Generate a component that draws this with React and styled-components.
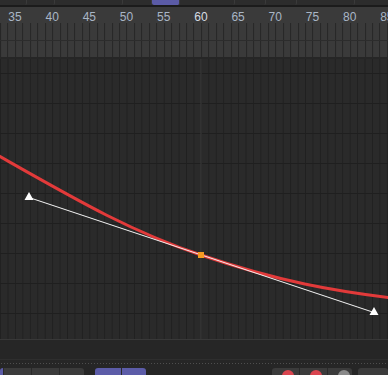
import React from 'react';
import styled, { createGlobalStyle } from 'styled-components';

const FRAME = 7.44;
const ORIGIN = 0.1; // x of frame 33
const xOf = (f) => ORIGIN + (f - 33) * FRAME;

const Global = createGlobalStyle`
  html, body { margin: 0; padding: 0; background: #2a2a2a; overflow: hidden; }
  body { font-family: "Liberation Sans", Arial, sans-serif; }
`;

const Screen = styled.div`
  width: 388px;
  height: 375px;
  display: flex;
  flex-direction: column;
  background: #2a2a2a;
  overflow: hidden;
`;

const TopStrip = styled.div`
  height: 5px;
  display: flex;
  background: #2c2c2c;
  border-bottom: 2px solid #1b1b1b;
`;

const StripCell = styled.div`
  width: ${(p) => p.$w}px;
  flex: none;
  background: ${(p) => (p.$active ? '#5b5ba6' : 'transparent')};
  border-right: 1px solid #3a3a3a;
  border-radius: 0 0 2px 2px;
`;

const Ruler = styled.div`
  background: #3a3a3a;
  display: flex;
  flex-direction: column;
`;

const Labels = styled.div`
  height: 16px;
  display: flex;
  margin-left: ${xOf(35) - FRAME * 2.5}px;
`;

const Label = styled.div`
  width: ${FRAME * 5}px;
  flex: none;
  text-align: center;
  font-size: 12px;
  line-height: 20px;
  color: ${(p) => (p.$current ? '#d7dce2' : '#a9b6c6')};
`;

const TickRow = styled.div`
  height: ${(p) => p.$h}px;
  background-image: repeating-linear-gradient(
    to right,
    #262626 0,
    #262626 1px,
    transparent 1px,
    transparent ${FRAME}px
  );
  background-position: ${ORIGIN}px 0;
  border-bottom: ${(p) => (p.$divider ? '1px solid #2c2c2c' : 'none')};
`;

const Gap = styled.div`
  height: 2px;
  background: #262626;
`;

const CurveArea = styled.div`
  position: relative;
  height: 280px;
  background-color: #2a2a2a;
  background-image:
    repeating-linear-gradient(to bottom, transparent 0, transparent 15px, #1f1f1f 15px, #1f1f1f 16px, transparent 16px, transparent 30px),
    repeating-linear-gradient(to right, #202020 0, #202020 1px, transparent 1px, transparent ${FRAME}px);
  background-position: 0 -1px, ${ORIGIN}px 0;
  background-size: 100% 30px, ${FRAME}px 100%;
`;

const Graph = styled.svg`
  position: absolute;
  inset: 0;
  width: 100%;
  height: 100%;
`;

const Footer = styled.div`
  flex: 1;
  display: flex;
  flex-direction: column;
  background: #262626;
  border-top: 1px solid #383838;
`;

const FooterBody = styled.div`
  height: 19px;
  border-bottom: 1px solid #2e2e2e;
`;

const Dots = styled.div`
  height: 7px;
  background-image: radial-gradient(circle, #4e4e4e 0.7px, transparent 0.9px);
  background-size: 3px 3px;
  background-position: 0 2px;
  background-repeat: repeat-x;
`;

const Buttons = styled.div`
  flex: 1;
  display: flex;
  align-items: flex-end;
`;

const ButtonGroup = styled.div`
  display: flex;
  margin-left: ${(p) => p.$ml || 0}px;
  border-radius: 3px 3px 0 0;
  overflow: hidden;
`;

const Btn = styled.div`
  width: ${(p) => p.$w}px;
  height: 7px;
  flex: none;
  background: ${(p) => (p.$blue ? '#5c5ca8' : '#3b3b3b')};
  border-right: 1px solid #2a2a2a;
  display: flex;
  justify-content: center;
`;

const Dot = styled.span`
  width: 12px;
  height: 12px;
  margin-top: 2px;
  margin-right: ${(p) => p.$shift || 0}px;
  border-radius: 50%;
  background: ${(p) => p.$c};
`;

const ticks = [35, 40, 45, 50, 55, 60, 65, 70, 75, 80, 85];

export default function App() {
  return (
    <Screen>
      <Global />
      <TopStrip>
        <StripCell $w={26} />
        <StripCell $w={27} />
        <StripCell $w={67} />
        <StripCell $w={28} />
        <StripCell $w={27} $active />
        <StripCell $w={54} />
        <StripCell $w={30} />
        <StripCell $w={30} />
        <StripCell $w={57} />
        <StripCell $w={42} />
      </TopStrip>
      <Ruler>
        <Labels>
          {ticks.map((t) => (
            <Label key={t} $current={t === 60}>{t}</Label>
          ))}
        </Labels>
        <TickRow $h={17} $divider />
        <TickRow $h={16} />
      </Ruler>
      <Gap />
      <CurveArea>
        <Graph viewBox="0 0 388 280">
          <line x1="201" y1="0" x2="201" y2="280" stroke="#3c3c3c" strokeWidth="1" />
          <path
            d="M -40 75 C 60 131, 120 169, 201 196 C 280 223, 335 232, 392 239"
            fill="none"
            stroke="#e23a3a"
            strokeWidth="3"
          />
          <line x1="29" y1="138.5" x2="374" y2="253.5" stroke="#f2f2f2" strokeWidth="1" />
          <polygon points="29,133 24.5,141 33.5,141" fill="#ffffff" />
          <polygon points="374,248 369.5,256 378.5,256" fill="#ffffff" />
          <rect x="198" y="193" width="6" height="6" fill="#f59a22" />
        </Graph>
      </CurveArea>
      <Footer>
        <FooterBody />
        <Dots />
        <Buttons>
          <ButtonGroup>
            <Btn $w={3} $blue />
            <Btn $w={27} />
            <Btn $w={27} />
            <Btn $w={27} />
          </ButtonGroup>
          <ButtonGroup $ml={11}>
            <Btn $w={26} $blue />
            <Btn $w={26} $blue />
          </ButtonGroup>
          <ButtonGroup $ml={126}>
            <Btn $w={27}><Dot $c="#d9454f" $shift={-4} /></Btn>
            <Btn $w={27}><Dot $c="#d9454f" $shift={-4} /></Btn>
            <Btn $w={27}><Dot $c="#8a8a8a" $shift={-4} /></Btn>
          </ButtonGroup>
          <ButtonGroup $ml={6}>
            <Btn $w={30} />
          </ButtonGroup>
        </Buttons>
      </Footer>
    </Screen>
  );
}
